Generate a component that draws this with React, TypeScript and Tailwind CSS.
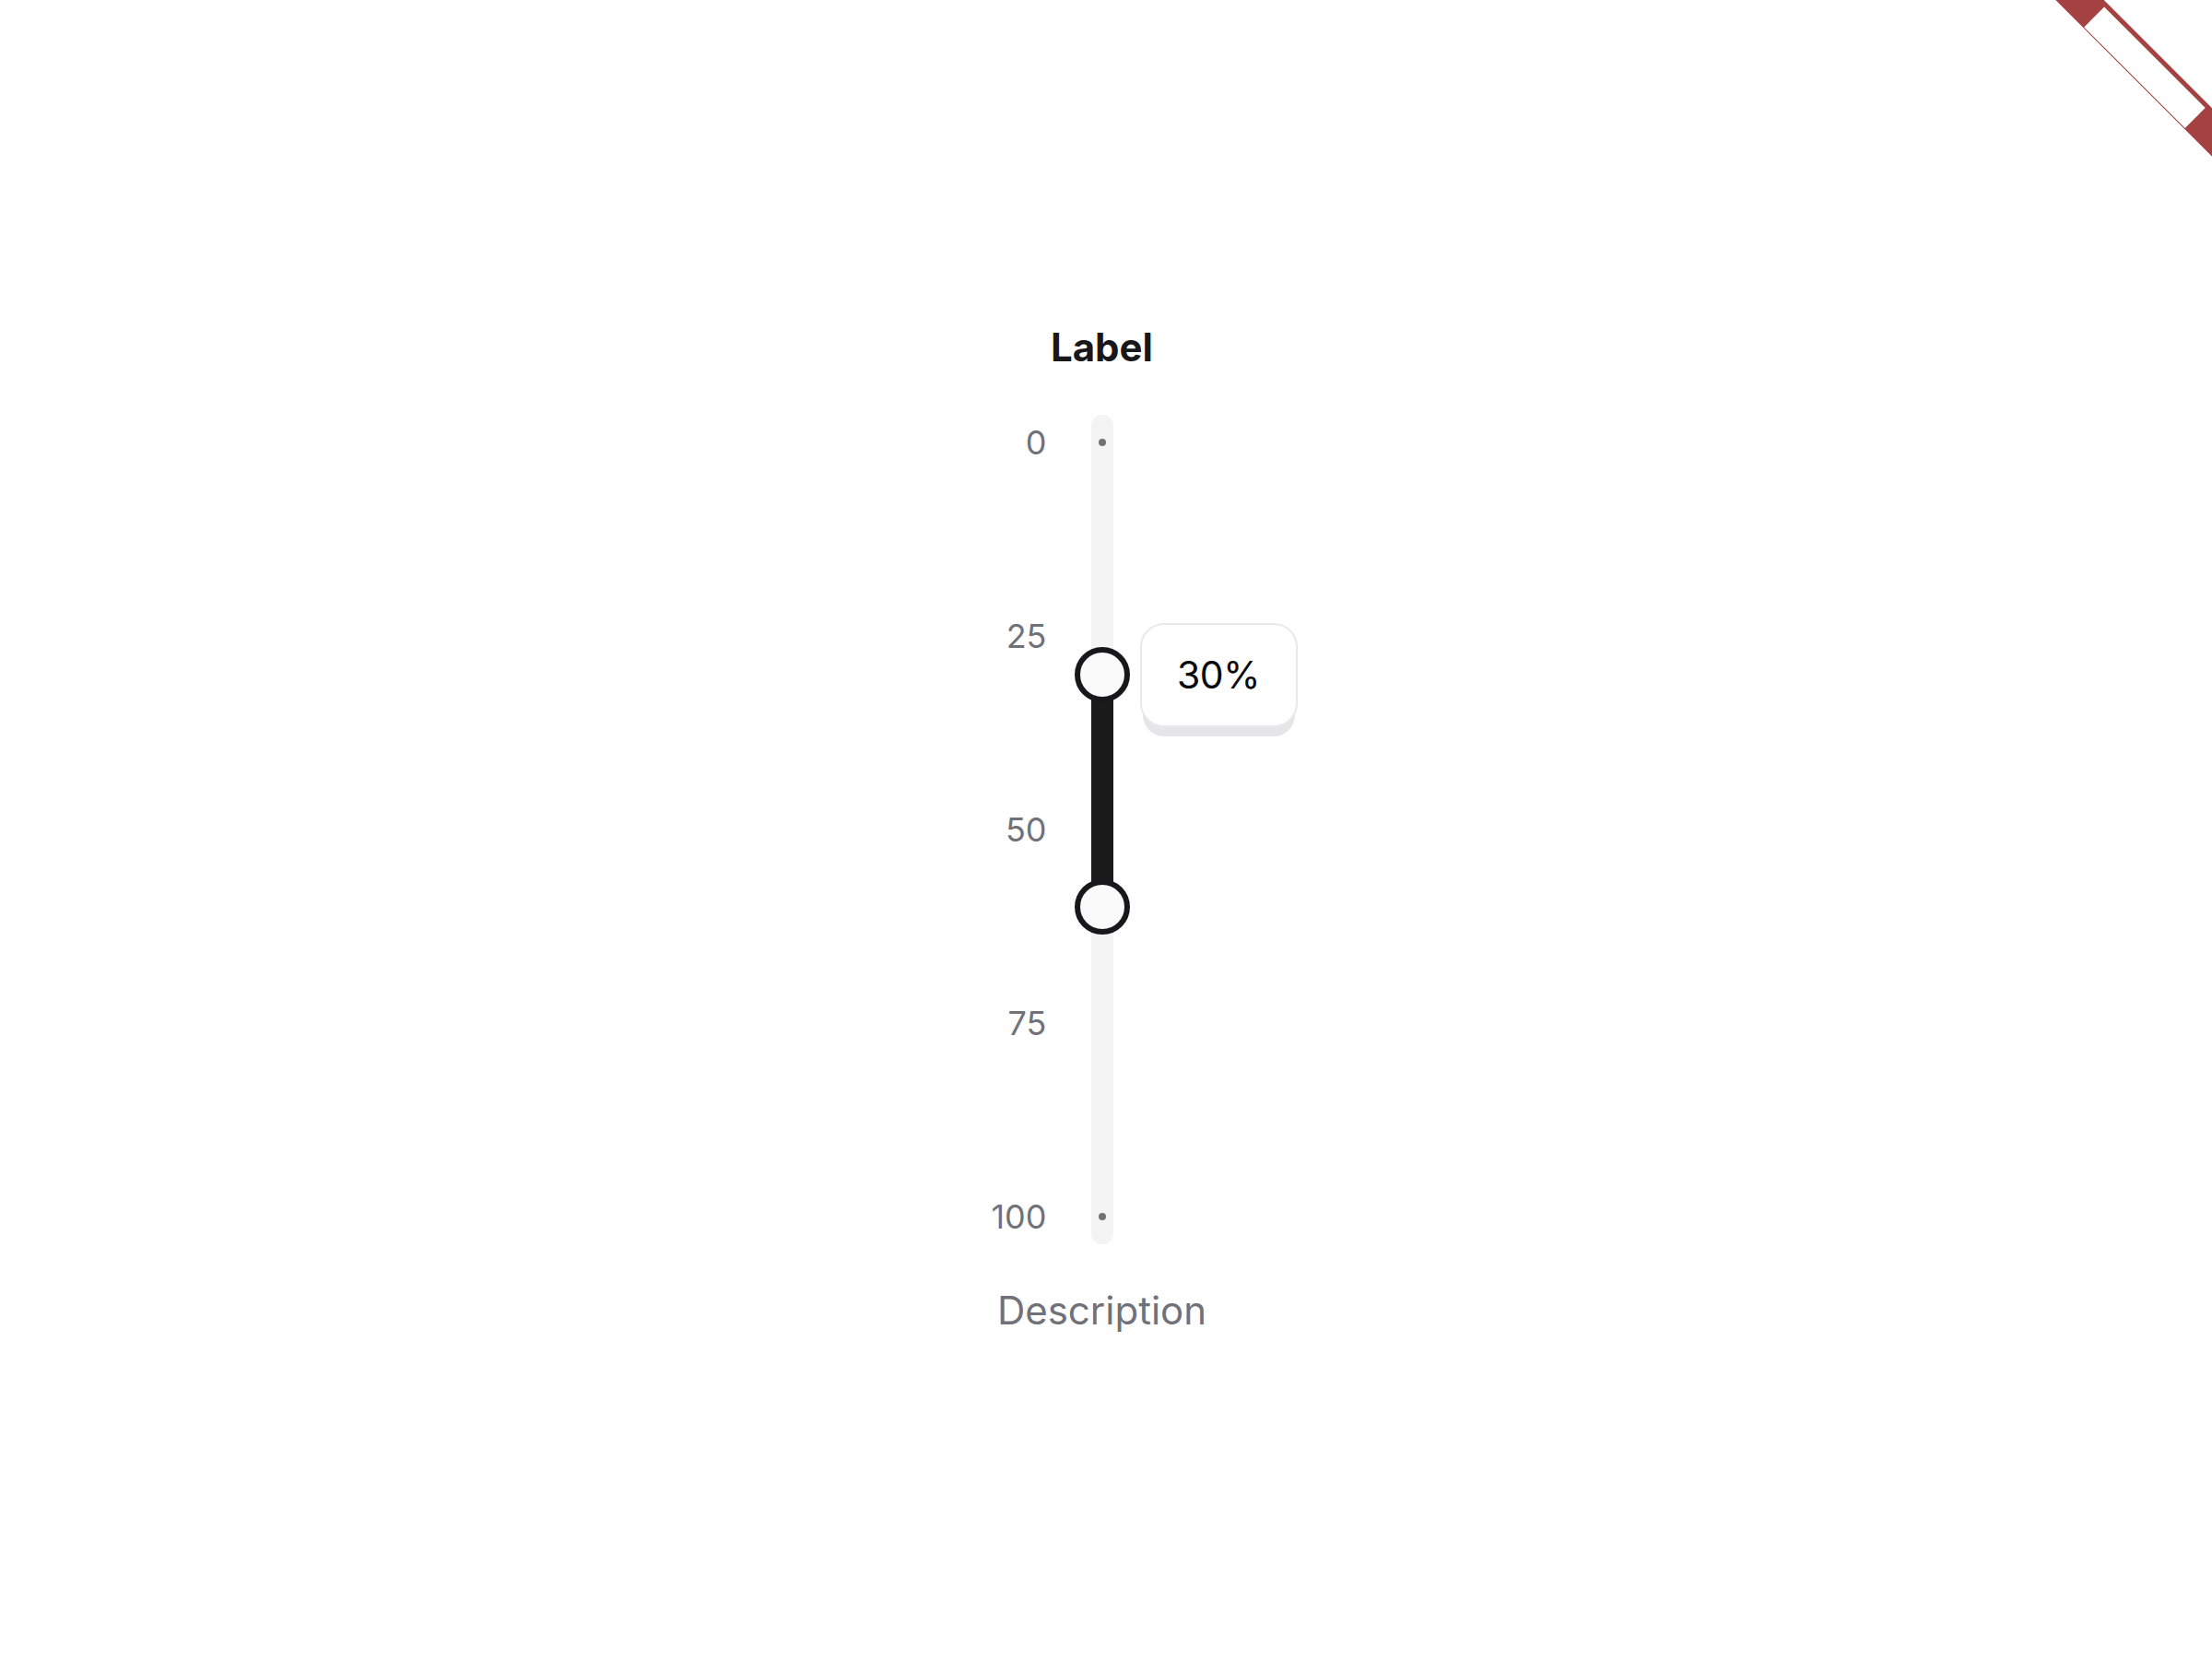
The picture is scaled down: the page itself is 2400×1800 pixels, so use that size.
import React from 'react'

type RangeValue = {
  from: number
  to: number
}

const ticks = [0, 25, 50, 75, 100]

// track geometry (px)
const TRACK_PAD = 30
const TRACK_H = 900
const SPAN = TRACK_H - TRACK_PAD * 2

function Ribbon() {
  return (
    <div className="pointer-events-none absolute left-[2128px] top-[52.5px] flex h-[37px] w-[400px] rotate-45 justify-center bg-[#a44141]">
      <div className="mt-[5px] h-[31px] w-[155px] bg-white" />
    </div>
  )
}

function VerticalRange({ value }: { value: RangeValue }) {
  const top = TRACK_PAD + (value.from / 100) * SPAN
  const bottom = TRACK_PAD + (value.to / 100) * SPAN

  return (
    <div className="grid h-[900px] w-[600px] grid-cols-[1fr_24px_1fr]">
      {/* scale labels */}
      <div className="flex flex-col items-end justify-between py-[30px] pr-[48px]">
        {ticks.map((t) => (
          <div key={t} className="flex h-0 items-center">
            <span className="text-[36px] leading-none text-[#71717a]">{t}</span>
          </div>
        ))}
      </div>

      {/* track */}
      <div className="relative flex flex-col items-center justify-between rounded-full bg-[#f4f4f5] py-[26px]">
        <span className="h-[8px] w-[8px] rounded-full bg-[#71717a]" />
        <span className="h-[8px] w-[8px] rounded-full bg-[#71717a]" />

        <div
          className="absolute left-0 right-0 bg-[#1a1a1a]"
          style={{ top, height: bottom - top }}
        />
        <div
          className="absolute left-1/2 h-[60px] w-[60px] -translate-x-1/2 rounded-full border-[6px] border-[#18181b] bg-[#fafafa]"
          style={{ top: top - 30 }}
        />
        <div
          className="absolute left-1/2 h-[60px] w-[60px] -translate-x-1/2 rounded-full border-[6px] border-[#18181b] bg-[#fafafa]"
          style={{ top: bottom - 30 }}
        />

        {/* value tooltip */}
        <div
          className="absolute left-[53px] flex h-[113px] w-[171px] items-center justify-center rounded-[26px] border-2 border-[#e9e9eb] bg-white shadow-[0_13px_0_-3px_#e6e6e8]"
          style={{ top: top - 56.5 }}
        >
          <span className="text-[41px] leading-none tracking-[-0.5px] text-[#09090b]">{value.from}%</span>
        </div>
      </div>

      <div />
    </div>
  )
}

export default function App() {
  return (
    <div className="relative h-[1800px] w-full overflow-hidden bg-white font-[Inter,sans-serif]">
      <Ribbon />
      <div className="flex flex-col items-center pr-[9px] pt-[351px]">
        <p className="text-[42px] font-bold leading-[52px] text-[#18181b]">Label</p>
        <div className="mt-[47px]">
          <VerticalRange value={{ from: 30, to: 60 }} />
        </div>
        <p className="mt-[47px] text-[42px] leading-[50px] text-[#71717a]">Description</p>
      </div>
    </div>
  )
}
